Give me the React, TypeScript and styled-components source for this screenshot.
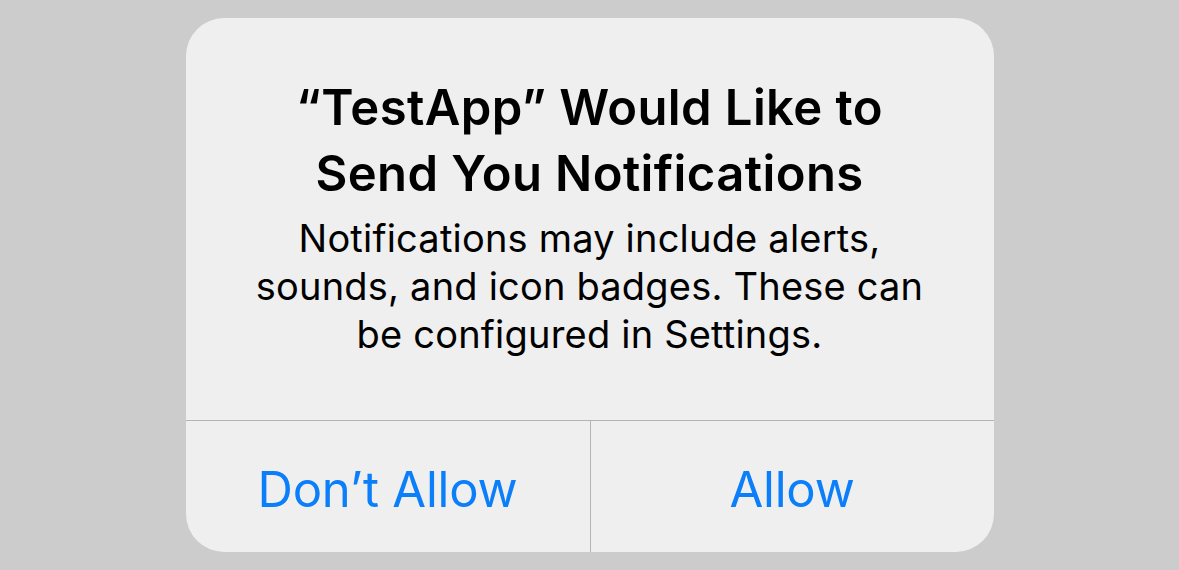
import React from "react";
import styled, { createGlobalStyle } from "styled-components";

const GlobalStyle = createGlobalStyle`
  html, body {
    margin: 0;
    padding: 0;
    background: #cccccc;
  }
  #root {
    width: 100vw;
    height: 100vh;
  }
`;

// page backdrop
const Screen = styled.div`
  width: 100%;
  height: 100%;
  display: flex;
  align-items: center;
  justify-content: center;
  font-family: Inter, "Liberation Sans", sans-serif;
`;

const AlertCard = styled.div`
  width: 808px;
  height: 534px;
  background: #efefef;
  border-radius: 38px;
  display: flex;
  flex-direction: column;
  overflow: hidden;
`;

const Content = styled.div`
  flex: 1;
  display: flex;
  flex-direction: column;
  align-items: center;
  padding: 57px 30px 0;
  text-align: center;
`;

const Title = styled.h1`
  margin: 0;
  font-size: 49px;
  line-height: 66px;
  font-weight: 600;
  color: #000;
  letter-spacing: 0.4px;
  white-space: nowrap;
`;

const Message = styled.p`
  margin: 7px 0 0;
  font-size: 38px;
  line-height: 48px;
  font-weight: 400;
  color: #000;
  letter-spacing: 0.2px;
  white-space: nowrap;
`;

const Actions = styled.div`
  height: 131px;
  display: grid;
  grid-template-columns: 1fr 1fr;
  border-top: 1.5px solid #b4b4b4;
`;

type ActionProps = {
  $divider?: boolean;
};

const ActionButton = styled.button<ActionProps>`
  appearance: none;
  background: transparent;
  border: none;
  border-left: ${(props) => (props.$divider ? "1.5px solid #b4b4b4" : "none")};
  font-family: inherit;
  font-size: 49px;
  font-weight: 400;
  color: #0b7efa;
  display: grid;
  place-items: center;
  padding: 5px 0 0;
  letter-spacing: -0.2px;
  cursor: pointer;
`;

export default function App() {
  return (
    <>
      <GlobalStyle />
      <Screen>
        <AlertCard>
          <Content>
            <Title>
              “TestApp” Would Like to
              <br />
              Send You Notifications
            </Title>
            <Message>
              Notifications may include alerts,
              <br />
              sounds, and icon badges. These can
              <br />
              be configured in Settings.
            </Message>
          </Content>
          <Actions>
            <ActionButton>Don’t Allow</ActionButton>
            <ActionButton $divider>Allow</ActionButton>
          </Actions>
        </AlertCard>
      </Screen>
    </>
  );
}
